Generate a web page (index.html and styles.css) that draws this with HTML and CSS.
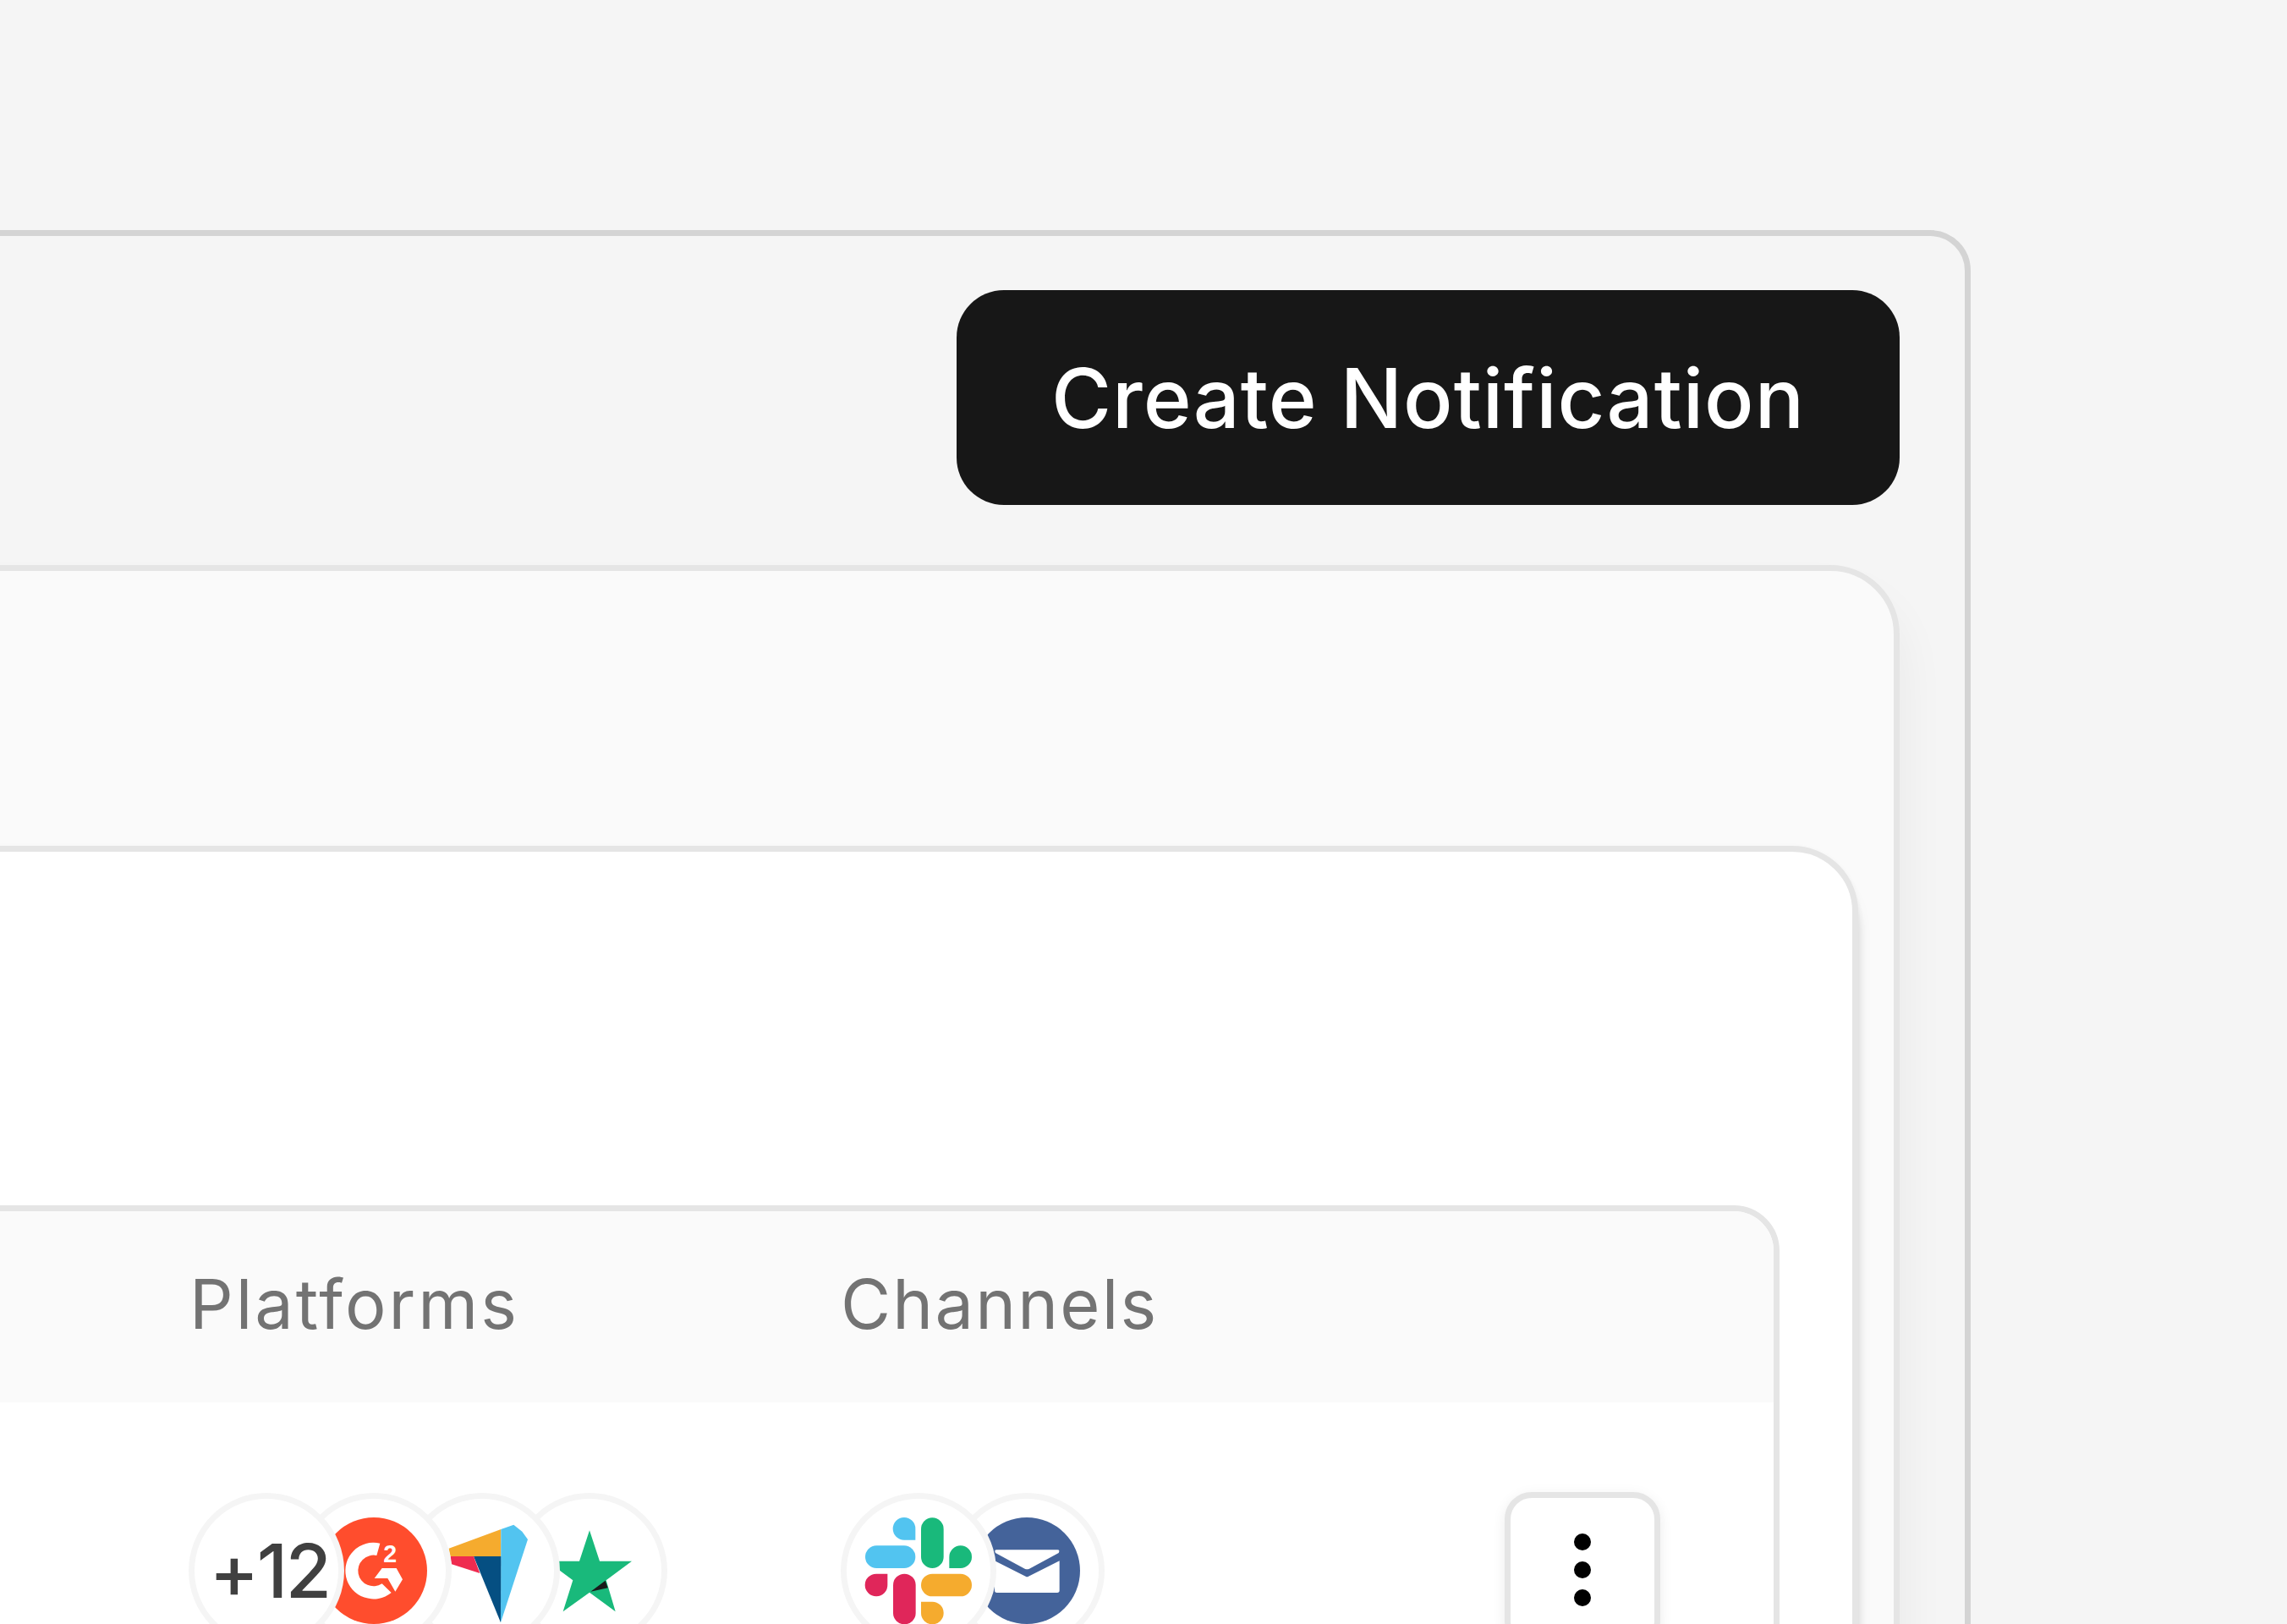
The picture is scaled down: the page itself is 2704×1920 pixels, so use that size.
FILE: index.html
```html
<!DOCTYPE html>
<html lang="en">
<head>
<meta charset="utf-8">
<title>Notifications</title>
<link rel="stylesheet" href="styles.css">
</head>
<body>
<main class="shell">
  <div class="toolbar">
    <button class="create-btn" type="button">Create Notification</button>
  </div>
  <section class="panel">
    <div class="card">
      <div class="table">
        <div class="table-row table-head">
          <div class="cell-spacer"></div>
          <div class="col-title col-title-platforms">Platforms</div>
          <div class="col-title">Channels</div>
          <div></div>
        </div>
        <div class="table-row table-body">
          <div class="cell-spacer"></div>
          <div class="stack">
            <span class="chip chip-count">+12</span>
            <span class="chip">
              <svg class="logo" viewBox="27 42 378 378" aria-label="G2">
                <circle cx="216" cy="231" r="189" fill="#ff4d2d"/>
                <path fill="#fff" d="M238 134A100 100 0 1 0 278 309L245 277A55 55 0 1 1 226 177Z"/>
                <text class="g2-two" x="274" y="200" text-anchor="middle">2</text>
                <path fill="#fff" d="M245 222H296L318 262L292 305L265 258H218Z"/>
              </svg>
            </span>
            <span class="chip">
              <svg class="logo" viewBox="-39 42 378 378" aria-label="Capterra">
                <path fill="#f5ab2e" d="M32 152L217 84V180H38Z"/>
                <path fill="#52c4f0" d="M217 84L262 68L292 92L312 120L216 415Z"/>
                <path fill="#054f82" d="M120 180H217L216 415Z"/>
                <path fill="#ef2b4f" d="M38 180H120L142 240L42 208Z"/>
              </svg>
            </span>
            <span class="chip">
              <svg class="logo" viewBox="342 42 378 378" aria-label="Trustpilot">
                <path fill="#19b97b" d="M531 88L567 197H681L590 265L623 376L531 308L437 376L472 265L381 197H495Z"/>
                <path fill="#1a1a1a" d="M535 305L587 266L596 292Z"/>
              </svg>
            </span>
          </div>
          <div class="stack">
            <span class="chip">
              <svg class="logo" viewBox="129 161 378 378" aria-label="Slack">
                <rect fill="#52c4f0" x="129" y="261" width="178" height="80" rx="40"/>
                <path fill="#52c4f0" d="M307 241H268A40 40 0 1 1 307 201Z"/>
                <rect fill="#19b97b" x="327" y="162" width="80" height="179" rx="40"/>
                <path fill="#19b97b" d="M427 341V301A40 40 0 1 1 466 341Z"/>
                <path fill="#e0265a" d="M208 361V400A40 40 0 1 1 168 361Z"/>
                <rect fill="#e0265a" x="228" y="361" width="80" height="179" rx="40"/>
                <rect fill="#f5ab2e" x="327" y="361" width="180" height="80" rx="40"/>
                <path fill="#f5ab2e" d="M327 460H367A40 40 0 1 1 327 500Z"/>
              </svg>
            </span>
            <span class="chip">
              <svg class="logo" viewBox="510 161 378 378" aria-label="Email">
                <circle cx="699" cy="350" r="189" fill="#44639a"/>
                <path fill="#fff" d="M592 276H808Q818 276 812 287L708 343Q700 347 692 343L588 287Q582 276 592 276Z"/>
                <path fill="#fff" d="M585 315L695 370Q700 373 705 370L815 315V420Q815 428 807 428H593Q585 428 585 420Z"/>
              </svg>
            </span>
          </div>
          <button class="kebab" type="button" aria-label="More actions">
            <span class="kebab-dot"></span>
            <span class="kebab-dot"></span>
            <span class="kebab-dot"></span>
          </button>
        </div>
      </div>
    </div>
  </section>
</main>
</body>
</html>
```
FILE: styles.css
```css
* {
  box-sizing: border-box;
}

html,
body {
  margin: 0;
  height: 100%;
  background: #f5f5f5;
  overflow: hidden;
}

body {
  font-family: "Inter", "Liberation Sans", sans-serif;
  font-weight: 400;
}

.shell {
  margin: 272px 374px 0 -240px;
  padding: 64px 77px 0 0;
  border: 7px solid #d4d4d4;
  border-radius: 48px;
  background: #f5f5f5;
}

.toolbar {
  display: flex;
  justify-content: flex-end;
}

.create-btn {
  display: flex;
  align-items: center;
  justify-content: center;
  width: 1115px;
  height: 254px;
  padding: 0;
  border: 0;
  border-radius: 56px;
  background: #171717;
  color: #fff;
  font: inherit;
  font-size: 97px;
  font-weight: 500;
  letter-spacing: 1px;
}

.panel {
  margin-top: 71px;
  padding: 325px 42px 0 0;
  border: 7px solid #e5e5e5;
  border-radius: 82px;
  background: #fafafa;
  box-shadow: 0 40px 60px rgba(0, 0, 0, 0.06);
}

.card {
  padding: 418px 86px 0 0;
  border: 7px solid #e5e5e5;
  border-radius: 78px;
  background: #fff;
  box-shadow: 4px 26px 8px rgba(0, 0, 0, 0.07), 0 20px 24px rgba(0, 0, 0, 0.03), 0 2px 6px rgba(0, 0, 0, 0.05);
}

.table {
  border: 7px solid #e5e5e5;
  border-radius: 54px;
  overflow: hidden;
  background: #fff;
}

.table-row {
  display: grid;
  grid-template-columns: minmax(0, 1fr) 770px 785px 184px;
  padding-right: 134px;
}

.table-head {
  height: 226px;
  padding-bottom: 6px;
  align-items: center;
  background: #fafafa;
}

.table-body {
  padding-top: 107px;
  padding-bottom: 300px;
}

.col-title {
  color: #737373;
  font-size: 81px;
  letter-spacing: 2.2px;
}

.col-title-platforms {
  letter-spacing: 3px;
}

.stack {
  display: flex;
}

.stack:nth-child(2) {
  margin-left: -1.5px;
}

.chip {
  position: relative;
  display: flex;
  flex: none;
  align-items: center;
  justify-content: center;
  width: 184px;
  height: 184px;
  margin-left: -56.5px;
  border: 7px solid #f5f5f5;
  border-radius: 50%;
  background: #fff;
}

.chip:first-child {
  margin-left: 0;
  z-index: 4;
}

.chip:nth-child(2) {
  z-index: 3;
}

.chip:nth-child(3) {
  z-index: 2;
}

.chip:nth-child(4) {
  z-index: 1;
}

.chip-count {
  padding-left: 8px;
  color: #404040;
  font-size: 88px;
  font-weight: 500;
  letter-spacing: -2.5px;
}

.logo {
  display: block;
  flex: none;
  width: 126px;
  height: 126px;
  overflow: visible;
}

.g2-two {
  fill: #fff;
  font-family: "Liberation Sans", sans-serif;
  font-size: 86px;
  font-weight: 700;
}

.kebab {
  display: flex;
  flex-direction: column;
  align-items: center;
  justify-content: center;
  gap: 13px;
  width: 184px;
  height: 184px;
  margin-top: -1px;
  padding: 0;
  border: 7px solid #e5e5e5;
  border-radius: 32px;
  background: #fff;
  box-shadow: 0 4px 16px rgba(0, 0, 0, 0.08);
}

.kebab-dot {
  display: block;
  width: 20px;
  height: 20px;
  border-radius: 50%;
  background: #000;
}
```
